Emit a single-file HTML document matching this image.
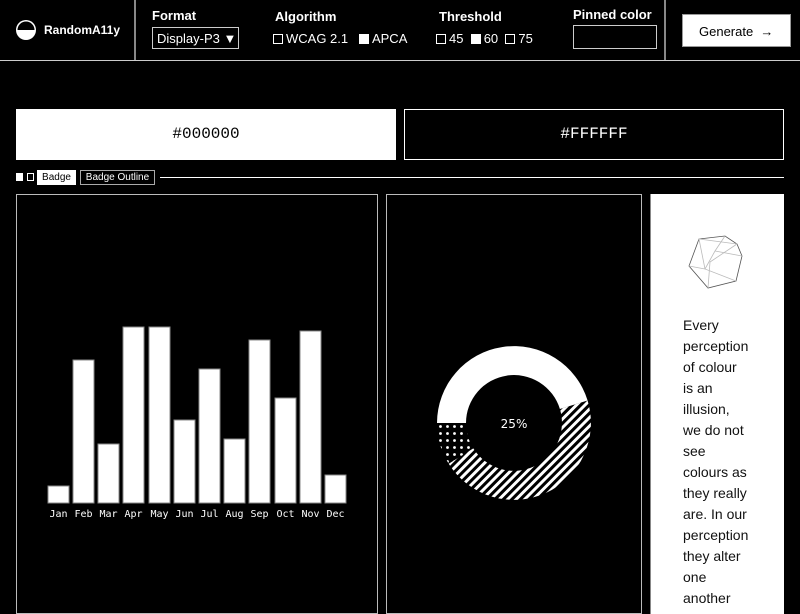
<!DOCTYPE html>
<html><head><style>
*{margin:0;padding:0;box-sizing:border-box}
body{width:800px;height:600px;background:#000;color:#fff;font-family:"Liberation Sans",sans-serif;position:relative;overflow:hidden}
.a{position:absolute}
.lbl{font-size:13px;font-weight:bold}
.cb{display:inline-block;width:10px;height:10px;border:1px solid #fff;vertical-align:-1px;margin-right:3px}
.cb.f{background:#fff}
.opt{font-size:13px}
.mono{font-family:"Liberation Mono","DejaVu Sans Mono",monospace}
</style></head><body>
<!-- header -->
<div class="a" style="left:0;top:60px;width:800px;height:1px;background:#ccc"></div>
<div class="a" style="left:134px;top:0;width:2px;height:60px;background:#888"></div>
<div class="a" style="left:664px;top:0;width:2px;height:60px;background:#888"></div>
<svg class="a" style="left:15px;top:19px" width="22" height="22" viewBox="0 0 22 22"><circle cx="11" cy="11" r="10" fill="#fff"/><path d="M2.5 11 A8.5 8.5 0 0 1 19.5 11 Z" fill="#000"/></svg>
<div class="a lbl" style="left:44px;top:23px;font-size:12px">RandomA11y</div>
<div class="a lbl" style="left:152px;top:8px">Format</div>
<div class="a" style="left:152px;top:27px;width:87px;height:22px;border:1px solid #ccc;font-size:13px;padding:3px 0 0 4px">Display-P3 ▼</div>
<div class="a lbl" style="left:275px;top:9px">Algorithm</div>
<div class="a opt" style="left:273px;top:31px"><span class="cb"></span>WCAG 2.1 &nbsp;&nbsp;<span class="cb f"></span>APCA</div>
<div class="a lbl" style="left:439px;top:9px">Threshold</div>
<div class="a opt" style="left:436px;top:31px"><span class="cb"></span>45 &nbsp;<span class="cb f"></span>60 &nbsp;<span class="cb"></span>75</div>
<div class="a lbl" style="left:573px;top:7px">Pinned color</div>
<div class="a" style="left:573px;top:25px;width:84px;height:24px;border:1px solid #ccc"></div>
<div class="a" style="left:682px;top:14px;width:109px;height:33px;background:#fff;color:#000;font-size:13px;padding:9px 0 0 16px;border:1px solid #999">Generate &nbsp;→</div>
<!-- color boxes -->
<div class="a mono" style="left:16px;top:109px;width:380px;height:51px;background:#fff;color:#000;font-size:16px;text-align:center;line-height:51px">#000000</div>
<div class="a mono" style="left:404px;top:109px;width:380px;height:51px;border:1px solid #fff;font-size:16px;text-align:center;line-height:49px">#FFFFFF</div>
<!-- badges row -->
<div class="a" style="left:16px;top:173px;width:7px;height:8px;background:#fff"></div>
<div class="a" style="left:27px;top:173px;width:7px;height:8px;border:1px solid #fff"></div>
<div class="a" style="left:37px;top:170px;width:39px;height:15px;background:#fff;color:#000;font-size:10px;text-align:center;line-height:15px">Badge</div>
<div class="a" style="left:80px;top:170px;width:75px;height:15px;border:1px solid #aaa;font-size:10px;text-align:center;line-height:13px">Badge Outline</div>
<div class="a" style="left:160px;top:177px;width:624px;height:1px;background:#fff"></div>
<!-- panels -->
<div class="a" style="left:16px;top:194px;width:362px;height:420px;border:1px solid #bbb"></div>
<div class="a" style="left:386px;top:194px;width:256px;height:420px;border:1px solid #bbb"></div>
<div class="a" style="left:650px;top:194px;width:134px;height:420px;background:#fff;border-left:1px solid #888"></div>
<svg class="a" style="left:0;top:300px" width="380" height="230">
<g fill="#fff" stroke="#888" stroke-width="1">
<rect x="48" y="186" width="21" height="17"/>
<rect x="73" y="60" width="21" height="143"/>
<rect x="98" y="144" width="21" height="59"/>
<rect x="123" y="27" width="21" height="176"/>
<rect x="149" y="27" width="21" height="176"/>
<rect x="174" y="120" width="21" height="83"/>
<rect x="199" y="69" width="21" height="134"/>
<rect x="224" y="139" width="21" height="64"/>
<rect x="249" y="40" width="21" height="163"/>
<rect x="275" y="98" width="21" height="105"/>
<rect x="300" y="31" width="21" height="172"/>
<rect x="325" y="175" width="21" height="28"/>
</g>
<g fill="#fff" font-family="DejaVu Sans Mono,monospace" font-size="10" text-anchor="middle">
<text x="58.5" y="217">Jan</text><text x="83.5" y="217">Feb</text><text x="108.5" y="217">Mar</text><text x="133.5" y="217">Apr</text><text x="159.5" y="217">May</text><text x="184.5" y="217">Jun</text><text x="209.5" y="217">Jul</text><text x="234.5" y="217">Aug</text><text x="259.5" y="217">Sep</text><text x="285.5" y="217">Oct</text><text x="310.5" y="217">Nov</text><text x="335.5" y="217">Dec</text>
</g></svg>
<svg class="a" style="left:386px;top:295px" width="256" height="256">
<defs>
<pattern id="h" width="6" height="6" patternUnits="userSpaceOnUse" patternTransform="rotate(45)"><rect width="3" height="6" fill="#fff"/></pattern>
<pattern id="d" width="7" height="7" patternUnits="userSpaceOnUse"><circle cx="3.5" cy="3.5" r="1.4" fill="#fff"/></pattern>
</defs>
<g transform="translate(128,128)">
<path d="M-77 0 A77 77 0 0 1 73.6 -22.5 L45.9 -14 A48 48 0 0 0 -48 0 Z" fill="#fff"/>
<path d="M73.6 -22.5 A77 77 0 0 1 -65.3 40.8 L-40.7 25.4 A48 48 0 0 0 45.9 -14 Z" fill="url(#h)"/>
<path d="M-65.3 40.8 A77 77 0 0 1 -77 0 L-48 0 A48 48 0 0 0 -40.7 25.4 Z" fill="url(#d)"/>
<text x="0" y="5" fill="#fff" font-family="DejaVu Sans,sans-serif" font-size="12" text-anchor="middle">25%</text>
</g></svg>
<svg class="a" style="left:0;top:0" width="800" height="600" fill="none" stroke-width="0.8">
<path d="M699 239 L725 236 L737 244 L742 256 L736 281 L708 288 L689 266 Z" stroke="#555"/>
<path d="M699 239 L705 269 L736 281 M725 236 L715 251 L742 256 M689 266 L705 269 M699 239 L737 244 M708 288 L710 262 L737 244 M715 251 L705 269" stroke="#bbb"/>
</svg>
<div class="a" style="left:683px;top:315px;font-size:14px;line-height:21px;color:#111;font-family:'Liberation Sans',sans-serif">Every<br>perception<br>of colour<br>is an<br>illusion,<br>we do not<br>see<br>colours as<br>they really<br>are. In our<br>perception<br>they alter<br>one<br>another</div>
</body></html>
